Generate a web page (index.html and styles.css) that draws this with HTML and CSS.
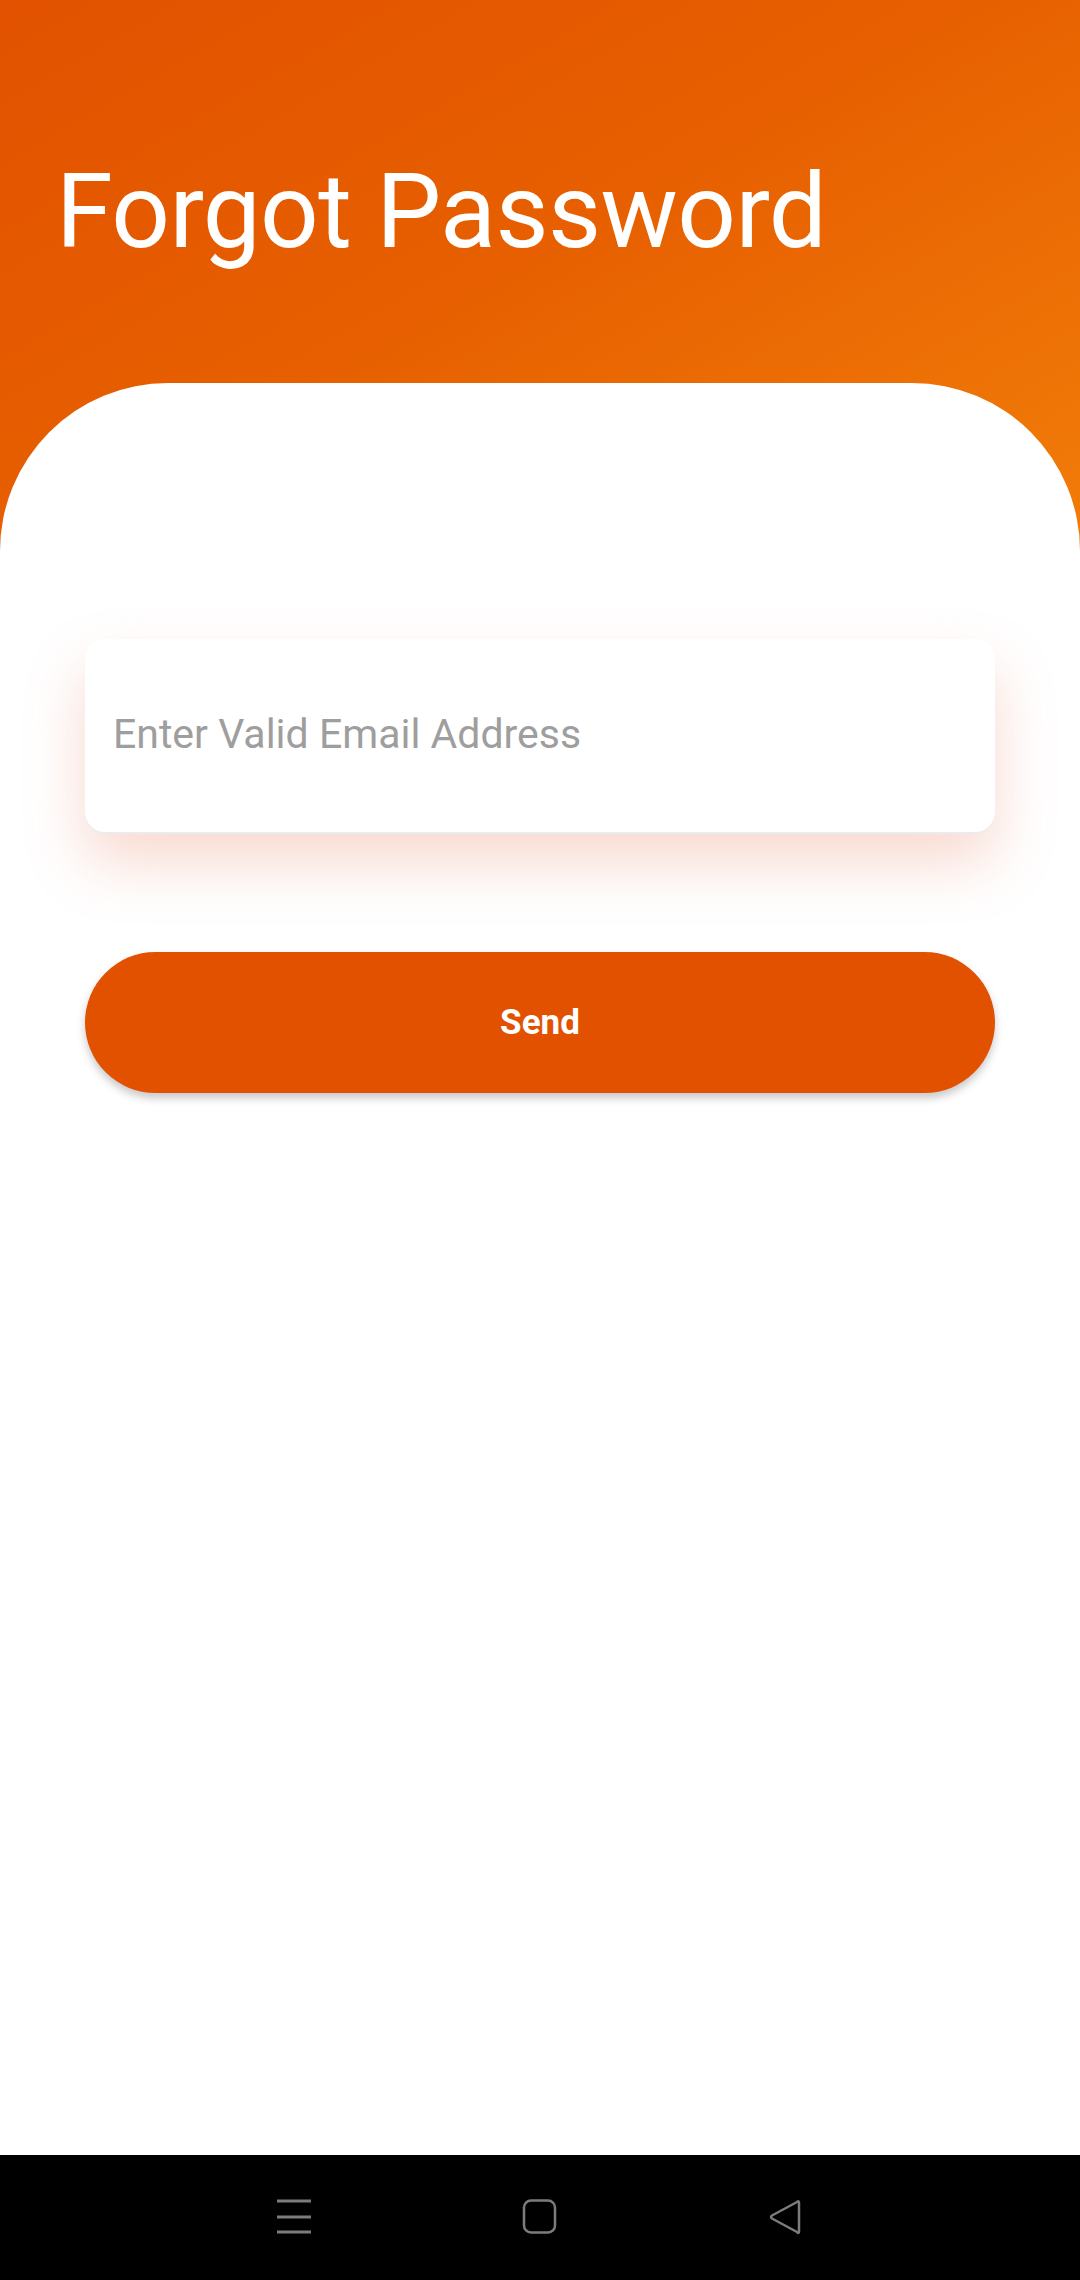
FILE: index.html
```html
<!DOCTYPE html>
<html lang="en">
<head>
<meta charset="utf-8">
<title>Forgot Password</title>
<link rel="stylesheet" href="styles.css">
</head>
<body>
<div class="screen">
  <main class="main">
    <header class="header">
      <h1 class="title">Forgot Password</h1>
    </header>
    <section class="card">
      <div class="field">
        <input class="field-input" type="email" placeholder="Enter Valid Email Address">
      </div>
      <button class="send-btn" type="button">Send</button>
    </section>
  </main>
  <nav class="navbar">
    <svg class="nav-icon" width="40" height="40" viewBox="0 0 40 40">
      <g stroke="#7c7c7c" stroke-width="3" fill="none">
        <line x1="3" y1="4" x2="37" y2="4"/>
        <line x1="3" y1="20" x2="37" y2="20"/>
        <line x1="3" y1="35" x2="37" y2="35"/>
      </g>
    </svg>
    <svg class="nav-icon" width="40" height="40" viewBox="0 0 40 40">
      <rect x="4" y="3.5" width="31" height="32" rx="7" ry="7" stroke="#7c7c7c" stroke-width="2.5" fill="none"/>
    </svg>
    <svg class="nav-icon" width="40" height="40" viewBox="0 0 40 40">
      <path d="M33 5.5 L33 34.5 Q33 37 31 35 L6 21.5 Q4 20 6 18.5 L31 5 Q33 3.5 33 5.5 Z" stroke="#7c7c7c" stroke-width="2.5" fill="none" stroke-linejoin="round" transform="translate(-1 0)"/>
    </svg>
  </nav>
</div>
</body>
</html>
```

FILE: styles.css
```css
* {
  box-sizing: border-box;
}

html, body {
  margin: 0;
  padding: 0;
}

body {
  width: 1080px;
  height: 2280px;
  font-family: Roboto, "Noto Sans", "Liberation Sans", sans-serif;
  background: #ffffff;
  overflow: hidden;
}

.screen {
  width: 1080px;
  height: 2280px;
  display: flex;
  flex-direction: column;
}

.main {
  flex: 1;
  display: flex;
  flex-direction: column;
  background-color: #ffffff;
  background-image: linear-gradient(150deg, #e25200 0%, #e75f00 45%, #f27f0a 100%);
  background-size: 100% 600px;
  background-repeat: no-repeat;
}

.header {
  padding: 160px 0 0 56px;
}

.title {
  margin: 0;
  font-family: Roboto, "Noto Sans", sans-serif;
  font-weight: 400;
  font-size: 103px;
  line-height: 1;
  color: #ffffff;
  letter-spacing: -0.6px;
}

.card {
  flex: 1;
  margin-top: 120px;
  background: #ffffff;
  border-radius: 168px 168px 0 0;
  padding: 256px 85px 0 85px;
  display: flex;
  flex-direction: column;
}

.field {
  height: 193px;
  background: #ffffff;
  border-radius: 20px;
  display: flex;
  align-items: center;
  padding: 0 28px;
  box-shadow: 0 2px 0 #ececec, 0 30px 60px rgba(228, 110, 70, 0.26);
}

.field-input {
  width: 100%;
  border: none;
  outline: none;
  background: transparent;
  padding: 0;
  margin: 0;
  font-family: Roboto, "Noto Sans", sans-serif;
  font-size: 41px;
  color: #333333;
  position: relative;
  top: -2px;
}

.field-input::placeholder {
  color: #9e9e9e;
  opacity: 1;
}

.send-btn {
  margin-top: 120px;
  height: 141px;
  width: 100%;
  border: none;
  border-radius: 71px;
  background: #e25100;
  color: #ffffff;
  font-family: Roboto, "Noto Sans", sans-serif;
  font-weight: 700;
  font-size: 35px;
  box-shadow: 0 5px 8px rgba(0, 0, 0, 0.22);
  padding: 0;
}

.navbar {
  height: 125px;
  background: #000000;
  display: flex;
  align-items: center;
  justify-content: center;
  padding-bottom: 2px;
}

.nav-icon {
  display: block;
}

.nav-icon:nth-child(1) {
  margin-right: 206px;
}

.nav-icon:nth-child(2) {
  margin-right: 207px;
}
```
